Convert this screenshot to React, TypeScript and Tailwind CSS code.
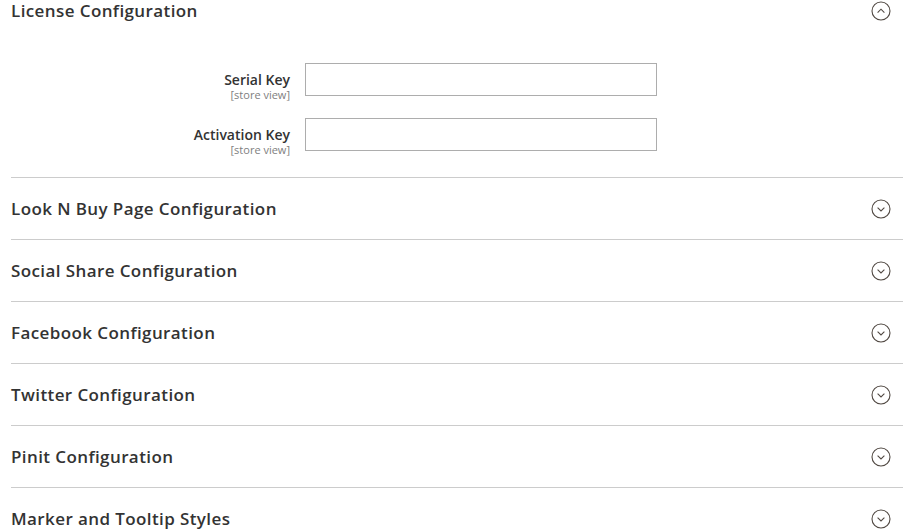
const sections = [
  "Look N Buy Page Configuration",
  "Social Share Configuration",
  "Facebook Configuration",
  "Twitter Configuration",
  "Pinit Configuration",
  "Marker and Tooltip Styles",
];

const fields = ["Serial Key", "Activation Key"];

const Toggle = ({ open }: { open: boolean }) => (
  <svg width="20" height="20" viewBox="0 0 20 20" fill="none">
    <circle cx="10" cy="10" r="9" stroke="#514943" strokeWidth="1.1" />
    {open ? (
      <path d="M6.6 11.6 L10 8.2 L13.4 11.6" stroke="#514943" strokeWidth="1.1" />
    ) : (
      <path d="M6.6 8.6 L10 12 L13.4 8.6" stroke="#514943" strokeWidth="1.1" />
    )}
  </svg>
);

const Header = ({ title, open }: { title: string; open: boolean }) => (
  <div className="flex h-[61px] items-center justify-between pr-[12px]">
    <span className="text-[17px] font-[560] tracking-[0.4px] text-[#333333]">{title}</span>
    <Toggle open={open} />
  </div>
);

export default function App() {
  return (
    <div className="h-[531px] overflow-hidden bg-white pl-[11px] pr-[2px] font-['Open_Sans',sans-serif]">
      <div className="-mt-[20px]">
        <Header title="License Configuration" open />
      </div>

      <div className="-ml-[11px] flex flex-col gap-[22px] pb-[26px] pt-[22px]">
        {fields.map((f) => (
          <div key={f} className="flex h-[33px] items-start">
            <div className="w-[290px] pt-[8px] text-right">
              <div className="text-[14px] leading-[17px] font-[560] text-[#333333]">{f}</div>
              <div className="text-[11px] leading-[13px] text-[#808080]">[store view]</div>
            </div>
            <input
              type="text"
              className="ml-[15px] h-[33px] w-[352px] border border-[#adadad] bg-white outline-none"
            />
          </div>
        ))}
      </div>

      {sections.map((s) => (
        <div key={s} className="border-t border-[#cccccc]">
          <Header title={s} open={false} />
        </div>
      ))}
    </div>
  );
}
